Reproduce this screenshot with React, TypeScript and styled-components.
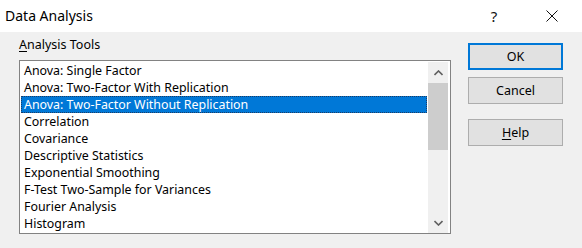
import styled, { createGlobalStyle } from "styled-components";

const GlobalStyle = createGlobalStyle`
  html, body {
    margin: 0;
    padding: 0;
    background: #f0f0f0;
  }
  body {
    font-family: "Noto Sans", "Open Sans", sans-serif;
    color: #000;
  }
`;

const Dialog = styled.div`
  width: 582px;
  height: 248px;
  background: #f0f0f0;
  overflow: hidden;
  display: flex;
  flex-direction: column;
`;

const TitleBar = styled.div`
  height: 32px;
  background: #fff;
  display: flex;
  align-items: center;
  padding-left: 5px;
  padding-right: 7px;
  flex-shrink: 0;
`;

const TitleText = styled.span`
  flex: 1;
  font-size: 14px;
  line-height: 20px;
  margin-top: -1px;
`;

const TitleButton = styled.div`
  width: 46px;
  height: 32px;
  display: flex;
  align-items: center;
  justify-content: center;
  font-size: 15px;
  color: #111;
`;

const TitleButtons = styled.div`
  display: flex;
  gap: 12px;
`;

const Body = styled.div`
  display: flex;
  padding: 5px 0 0 19px;
  gap: 17px;
`;

const LeftColumn = styled.div`
  display: flex;
  flex-direction: column;
  width: 432px;
`;

const GroupLabel = styled.div`
  font-size: 12.5px;
  line-height: 16px;
  height: 16px;
  margin-bottom: 7px;
`;

const Accel = styled.span`
  text-decoration: underline;
  text-underline-offset: 2px;
`;

const ListBox = styled.div`
  height: 174px;
  box-sizing: border-box;
  border: 1px solid #828282;
  background: #fff;
  display: flex;
  padding: 1px 2px 0 1px;
`;

const Items = styled.div`
  flex: 1;
  display: flex;
  flex-direction: column;
  padding-right: 1px;
`;

const Item = styled.div<{ $selected?: boolean }>`
  height: 17px;
  box-sizing: border-box;
  font-size: 12.4px;
  line-height: 15px;
  padding-left: 2px;
  white-space: nowrap;
  background: ${(p) => (p.$selected ? "#0078d7" : "transparent")};
  color: ${(p) => (p.$selected ? "#fff" : "#000")};
  border: 1px ${(p) => (p.$selected ? "dotted #1b3d66" : "solid transparent")};
`;

const ScrollBar = styled.div`
  width: 20px;
  background: #f0f0f0;
  display: flex;
  flex-direction: column;
`;

const ArrowButton = styled.div`
  height: 21px;
  display: flex;
  align-items: center;
  justify-content: center;
`;

const Track = styled.div`
  flex: 1;
  display: flex;
  flex-direction: column;
`;

const Thumb = styled.div`
  height: 67px;
  background: #cdcdcd;
`;

const RightColumn = styled.div`
  display: flex;
  flex-direction: column;
  padding-top: 6px;
`;

const DialogButton = styled.div<{ $default?: boolean; $gap?: number }>`
  width: 95px;
  height: 27px;
  box-sizing: border-box;
  margin-top: ${(p) => p.$gap ?? 0}px;
  background: #e1e1e1;
  border: ${(p) => (p.$default ? "2px solid #0078d7" : "1px solid #adadad")};
  display: flex;
  align-items: center;
  justify-content: center;
  font-size: 12.5px;
`;

const Chevron = ({ up }: { up?: boolean }) => (
  <svg width="9" height="6" viewBox="0 0 9 6">
    <polyline
      points={up ? "0.5,5 4.5,1 8.5,5" : "0.5,1 4.5,5 8.5,1"}
      fill="none"
      stroke="#606060"
      strokeWidth="1.6"
    />
  </svg>
);

const tools = [
  "Anova: Single Factor",
  "Anova: Two-Factor With Replication",
  "Anova: Two-Factor Without Replication",
  "Correlation",
  "Covariance",
  "Descriptive Statistics",
  "Exponential Smoothing",
  "F-Test Two-Sample for Variances",
  "Fourier Analysis",
  "Histogram",
];

export default function App() {
  return (
    <Dialog>
      <GlobalStyle />
      <TitleBar>
        <TitleText>Data Analysis</TitleText>
        <TitleButtons>
          <TitleButton>?</TitleButton>
          <TitleButton>
            <svg width="12" height="12" viewBox="0 0 12 12">
              <path d="M0.5 0.5 L11.5 11.5 M11.5 0.5 L0.5 11.5" stroke="#111" strokeWidth="1" />
            </svg>
          </TitleButton>
        </TitleButtons>
      </TitleBar>
      <Body>
        <LeftColumn>
          <GroupLabel>
            <Accel>A</Accel>nalysis Tools
          </GroupLabel>
          <ListBox>
            <Items>
              {tools.map((t, i) => (
                <Item key={t} $selected={i === 2}>
                  {t}
                </Item>
              ))}
            </Items>
            <ScrollBar>
              <ArrowButton>
                <Chevron up />
              </ArrowButton>
              <Track>
                <Thumb />
              </Track>
              <ArrowButton>
                <Chevron />
              </ArrowButton>
            </ScrollBar>
          </ListBox>
        </LeftColumn>
        <RightColumn>
          <DialogButton $default>OK</DialogButton>
          <DialogButton $gap={7}>Cancel</DialogButton>
          <DialogButton $gap={15}>
            <span>
              <Accel>H</Accel>elp
            </span>
          </DialogButton>
        </RightColumn>
      </Body>
    </Dialog>
  );
}
